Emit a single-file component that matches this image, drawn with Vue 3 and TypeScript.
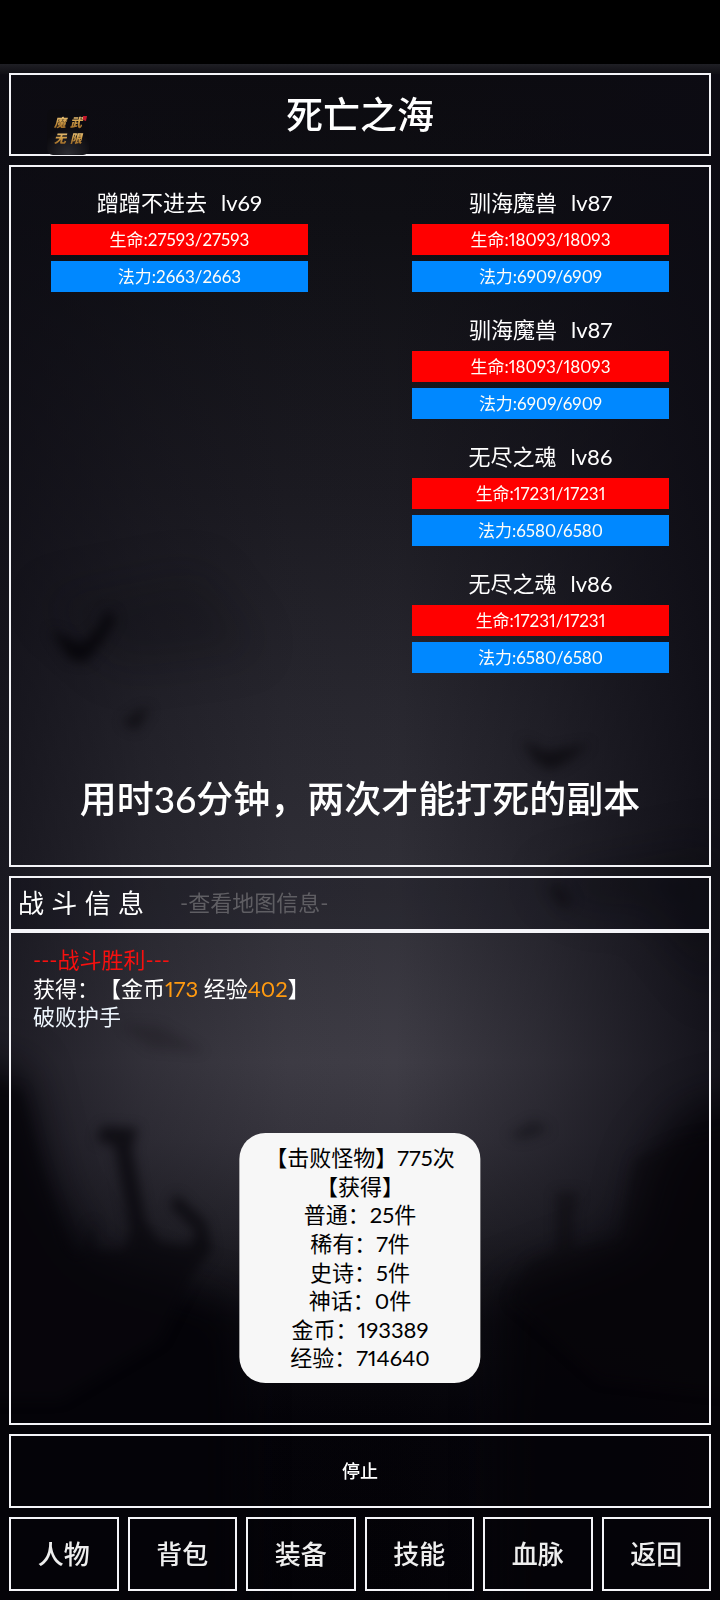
<script setup lang="ts">
interface Fighter {
  id: number
  name: string
  level: number
  hp: number
  hpMax: number
  mp: number
  mpMax: number
}

const heroes: Fighter[] = [
  { id: 1, name: '蹭蹭不进去', level: 69, hp: 27593, hpMax: 27593, mp: 2663, mpMax: 2663 },
]

const monsters: Fighter[] = [
  { id: 2, name: '驯海魔兽', level: 87, hp: 18093, hpMax: 18093, mp: 6909, mpMax: 6909 },
  { id: 3, name: '驯海魔兽', level: 87, hp: 18093, hpMax: 18093, mp: 6909, mpMax: 6909 },
  { id: 4, name: '无尽之魂', level: 86, hp: 17231, hpMax: 17231, mp: 6580, mpMax: 6580 },
  { id: 5, name: '无尽之魂', level: 86, hp: 17231, hpMax: 17231, mp: 6580, mpMax: 6580 },
]

const teams: Fighter[][] = [heroes, monsters]

const summary: string[] = [
  '【击败怪物】775次',
  '【获得】',
  '普通：25件',
  '稀有：7件',
  '史诗：5件',
  '神话：0件',
  '金币：193389',
  '经验：714640',
]

const menu: string[] = ['人物', '背包', '装备', '技能', '血脉', '返回']
</script>

<template>
  <div class="app" lang="zh-CN">
    <div class="status-bar"></div>

    <div class="screen">
      <svg class="scene" viewBox="0 64 720 1536" preserveAspectRatio="none" aria-hidden="true">
        <defs>
          <linearGradient id="sky" gradientUnits="userSpaceOnUse" x1="0" y1="64" x2="0" y2="1600">
            <stop offset="0" stop-color="#1f1f25" />
            <stop offset="0.008" stop-color="#0c0b10" />
            <stop offset="0.1" stop-color="#0f0f14" />
            <stop offset="0.28" stop-color="#1c1b22" />
            <stop offset="0.42" stop-color="#292830" />
            <stop offset="0.54" stop-color="#323139" />
            <stop offset="0.65" stop-color="#403e47" />
            <stop offset="0.7" stop-color="#38363f" />
            <stop offset="0.76" stop-color="#25242b" />
            <stop offset="0.82" stop-color="#0c0b10" />
            <stop offset="0.88" stop-color="#040308" />
            <stop offset="1" stop-color="#030206" />
          </linearGradient>
          <linearGradient id="sides" x1="0" y1="0" x2="1" y2="0">
            <stop offset="0" stop-color="#0c0b13" stop-opacity="0.65" />
            <stop offset="0.2" stop-color="#0c0b13" stop-opacity="0.28" />
            <stop offset="0.4" stop-color="#0c0b13" stop-opacity="0.06" />
            <stop offset="0.55" stop-color="#0c0b13" stop-opacity="0.02" />
            <stop offset="0.75" stop-color="#0c0b13" stop-opacity="0.35" />
            <stop offset="1" stop-color="#0c0b13" stop-opacity="0.85" />
          </linearGradient>
          <filter id="soft" filterUnits="userSpaceOnUse" x="-100" y="0" width="920" height="1800" color-interpolation-filters="sRGB">
            <feGaussianBlur stdDeviation="6" />
          </filter>
          <filter id="softer" filterUnits="userSpaceOnUse" x="-200" y="0" width="1120" height="1900" color-interpolation-filters="sRGB">
            <feGaussianBlur stdDeviation="22" />
          </filter>
        </defs>
        <rect x="0" y="64" width="720" height="1536" fill="url(#sky)" />
        <rect x="0" y="74" width="720" height="1526" fill="url(#sides)" />
        <g filter="url(#softer)" fill="#040308">
          <path d="M-90 1060L20 1070L50 1190L90 1260L240 1310V1800H-90Z" />
          <path d="M810 1080L690 1110L650 1160L630 1240L500 1290V1800H810Z" opacity="0.9" />
          <path d="M540 880L600 910L640 900L720 1000V840Z" opacity="0.3" />
          <path d="M40 600L200 570L260 650L120 670Z" opacity="0.2" />
        </g>
        <g filter="url(#soft)" fill="#08070c">
          <path d="M50 630L74 640L82 644L98 628L108 610L116 618L102 642L86 662L70 660Z" />
          <path d="M122 722L140 710L150 708L136 730Z" opacity="0.7" />
          <path d="M522 740L546 752L590 744L566 762L550 770L534 760Z" opacity="0.7" />
          <path d="M-60 1085L20 1090L38 1160L68 1250L80 1258L94 1220L92 1252L124 1250L130 1230L114 1146L96 1140L102 1126L138 1128L132 1148L146 1222L160 1242L190 1246L196 1232L170 1206L176 1194L206 1222L212 1250L192 1276L160 1340L60 1400H-60Z" opacity="0.75" />
          <path d="M556 1192L580 1192L574 1210L574 1250L620 1240L634 1160L680 1140L780 1120V1400L600 1380L510 1300L530 1262L556 1250Z" opacity="0.45" />
          <path d="M508 1136L534 1120L550 1130L524 1140Z" opacity="0.4" />
          <path d="M120 1024L160 1026L205 1052L150 1048Z" opacity="0.2" />
          <path d="M546 888L562 884L574 902L562 910Z" opacity="0.45" />
        </g>
      </svg>

      <header class="panel title-bar">
        <svg class="emblem" viewBox="0 0 46 46" role="img" aria-label="魔武无限">
          <defs>
            <linearGradient id="gold" x1="0" y1="0" x2="0" y2="1">
              <stop offset="0" stop-color="#f3d79a" />
              <stop offset="0.5" stop-color="#d3a04a" />
              <stop offset="1" stop-color="#8d5a1c" />
            </linearGradient>
            <radialGradient id="disc" cx="0.5" cy="1" r="0.6">
              <stop offset="0" stop-color="#2b2b31" />
              <stop offset="1" stop-color="#0c0b10" />
            </radialGradient>
          </defs>
          <rect x="2" y="0" width="42" height="46" rx="6" fill="url(#disc)" />
          <g class="emblem-text" fill="url(#gold)">
            <text x="9" y="18">魔</text>
            <text x="25" y="18">武</text>
            <text x="9" y="34">无</text>
            <text x="25" y="34">限</text>
          </g>
          <path d="M38 7L42 7L41 12L38 11Z" fill="#c3172b" />
        </svg>
        <h1>死亡之海</h1>
      </header>

      <main class="panel battle">
        <div class="teams">
          <ul v-for="(team, side) in teams" :key="side" class="team">
            <li v-for="f in team" :key="f.id">
              <div class="name">
                <span>{{ f.name }}</span>
                <span>lv{{ f.level }}</span>
              </div>
              <div class="bar hp">生命:{{ f.hp }}/{{ f.hpMax }}</div>
              <div class="bar mp">法力:{{ f.mp }}/{{ f.mpMax }}</div>
            </li>
          </ul>
        </div>
        <p class="caption">用时36分钟，两次才能打死的副本</p>
      </main>

      <section class="log">
        <div class="panel log-head">
          <h2>战 斗 信 息</h2>
          <button type="button" class="map-info">-查看地图信息-</button>
        </div>
        <div class="panel log-body">
          <p class="win">---战斗胜利---</p>
          <p>获得：【金币<span class="num">173</span> 经验<span class="num">402</span>】</p>
          <p class="item">破败护手</p>
          <div class="toast" role="status">
            <p v-for="line in summary" :key="line">{{ line }}</p>
          </div>
        </div>
      </section>

      <button type="button" class="panel stop">停止</button>

      <nav class="menu">
        <button v-for="m in menu" :key="m" type="button" class="panel">{{ m }}</button>
      </nav>
    </div>
  </div>
</template>

<style>
body {
  margin: 0;
  background: #000;
}
</style>

<style scoped>
.app {
  display: flex;
  flex-direction: column;
  min-height: 100vh;
  color: #fff;
  font: 22px/1.3 Lato, "Noto Sans CJK SC", sans-serif;
  font-variant-numeric: proportional-nums;
  text-spacing-trim: space-all;
}
.app * {
  box-sizing: border-box;
}
h1,
h2,
p,
ul {
  margin: 0;
  padding: 0;
  list-style: none;
}
button {
  margin: 0;
  padding: 0;
  border: 0;
  background: none;
  color: inherit;
  font: inherit;
  cursor: pointer;
}
.status-bar {
  height: 64px;
  background: #000;
}
.screen {
  position: relative;
  isolation: isolate;
  flex: 1;
  display: flex;
  flex-direction: column;
  gap: 9px;
  padding: 9px;
}
.scene {
  position: absolute;
  inset: 0;
  z-index: -1;
  width: 100%;
  height: 100%;
}
.panel {
  border: 2px solid #f4f4f8;
}
.title-bar {
  position: relative;
  padding: 18px 0 17px;
  text-align: center;
}
h1,
.caption {
  font-size: 37px;
  line-height: 44px;
  font-weight: 500;
}
.emblem {
  position: absolute;
  left: 34px;
  bottom: -1px;
  width: 46px;
  height: 46px;
}
.emblem-text {
  font: italic 900 12px "Noto Sans CJK SC", sans-serif;
}
.battle {
  padding: 20px 40px 44px;
}
.teams {
  display: grid;
  grid-template-columns: 1fr 1fr;
  column-gap: 104px;
}
.team {
  display: flex;
  flex-direction: column;
  gap: 22px;
}
.name {
  display: flex;
  justify-content: center;
  gap: 14px;
  height: 37px;
  line-height: 32px;
}
.bar {
  height: 31px;
  font-size: 17px;
  line-height: 31px;
  text-align: center;
  color: #fffdf8;
}
.hp {
  background: #f00;
}
.mp {
  margin-top: 6px;
  background: #0088ff;
}
.caption {
  margin: 104px -40px 0;
  text-align: center;
}
.log {
  flex: 1;
  display: flex;
  flex-direction: column;
}
.log-head {
  display: flex;
  align-items: center;
  gap: 36px;
  height: 55px;
  padding-left: 7px;
  background: rgba(10, 8, 20, 0.2);
}
h2 {
  font: 400 26px/36px Inter, "Noto Sans CJK SC", sans-serif;
}
.map-info {
  color: #5f5e63;
}
.log-body {
  position: relative;
  flex: 1;
  padding: 13px 22px;
}
.win {
  color: #f8100f;
}
.num {
  color: #ff9a10;
}
.item {
  color: #f0f8ff;
}
.toast {
  position: absolute;
  left: 50%;
  bottom: 40px;
  transform: translateX(-50%);
  padding: 11px 26px 10px;
  border-radius: 26px;
  background: #f7f7f7;
  color: #000;
  text-align: center;
  white-space: nowrap;
}
.stop {
  height: 74px;
  padding-top: 2px;
  font-size: 18px;
  font-weight: 500;
}
.menu {
  display: grid;
  grid-template-columns: repeat(6, 1fr);
  gap: 9px;
}
.menu button {
  height: 74px;
  padding-top: 2px;
  color: #eee;
  font-size: 26px;
  font-weight: 500;
}
</style>
